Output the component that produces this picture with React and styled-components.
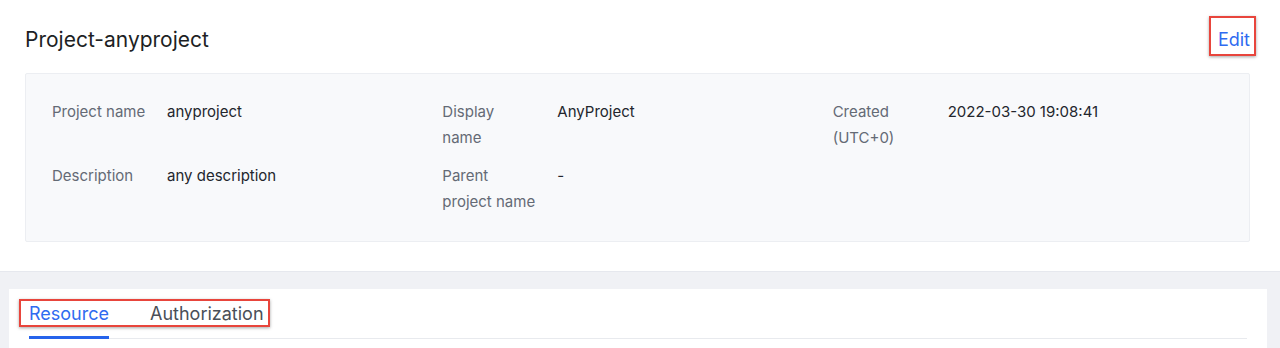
import React from 'react';
import styled, { createGlobalStyle } from 'styled-components';

const GlobalStyle = createGlobalStyle`
body {
  margin: 0;
  background: #ffffff;
  font-family: Inter, "Noto Sans", sans-serif;
  color: #1f2329;
}`

const Page = styled.div`
display: flex;
flex-direction: column;
height: 348px;
overflow: hidden;`

const Top = styled.section`
padding: 0 30px 29px 25px;
background: #fff;`

const Header = styled.header`
display: flex;
justify-content: space-between;
align-items: center;
height: 73px;
padding-top: 6px;
box-sizing: border-box;`

const Title = styled.h1`
margin: 0;
font-size: 21px;
font-weight: 400;
color: #1d1f24;`

const Highlight = styled.div`
position: relative;
display: inline-flex;
&::after {
  content: '';
  position: absolute;
  top: ${p => p.$t}px;
  right: ${p => p.$r}px;
  bottom: ${p => p.$b}px;
  left: ${p => p.$l}px;
  border: 2px solid #e8453c;
  box-shadow: 0 1px 3px rgba(0, 0, 0, 0.35);
  pointer-events: none;
}`

const EditLink = styled.a`
font-size: 18px;
color: #2f6bf0;
text-decoration: none;
cursor: pointer;`

const InfoCard = styled.div`
background: #f8f9fb;
border: 1px solid #eceef2;
border-radius: 2px;
padding: 25px 26px 26px;
display: grid;
grid-template-columns: repeat(3, 1fr);
row-gap: 12px;`

const Field = styled.div`
display: grid;
grid-template-columns: 115px 1fr;
font-size: 15px;
line-height: 26px;`

const Label = styled.div`
color: #646a75;
white-space: pre-line;`

const Value = styled.div`
color: #23262d;`

const Lower = styled.section`
flex: 1;
background: #f0f1f5;
border-top: 1px solid #e6e8ee;
padding: 17px 13px 0 9px;`

const Panel = styled.div`
background: #fff;
height: 100%;
padding: 0 20px;`

const TabBar = styled.div`
display: flex;
border-bottom: 1px solid #e8eaee;
padding-top: 15px;`

const Tab = styled.div`
position: relative;
font-size: 18px;
line-height: 20px;
padding-bottom: 14px;
color: ${p => (p.$active ? '#2f6bf0' : '#4a4f58')};
cursor: pointer;
& + & {
  margin-left: 41px;
}
&::after {
  content: '';
  display: ${p => (p.$active ? 'block' : 'none')};
  position: absolute;
  left: 0;
  right: 0;
  bottom: -1px;
  height: 3px;
  background: #2563eb;
}`

const TabGroup = styled(Highlight)`
display: flex;`

const fields = [
  ['Project name', 'anyproject'],
  ['Display\nname', 'AnyProject'],
  ['Created\n(UTC+0)', '2022-03-30 19:08:41'],
  ['Description', 'any description'],
  ['Parent\nproject name', '-'],
];

const App = () => {
  return (
    <Page>
      <GlobalStyle />
      <Top>
        <Header>
          <Title>Project-anyproject</Title>
          <Highlight $t={-13} $r={-6} $b={-6} $l={-9}>
            <EditLink>Edit</EditLink>
          </Highlight>
        </Header>
        <InfoCard>
          {fields.map(([label, value]) => (
            <Field key={label}>
              <Label>{label}</Label>
              <Value>{value}</Value>
            </Field>
          ))}
        </InfoCard>
      </Top>
      <Lower>
        <Panel>
          <TabBar>
            <TabGroup $t={-5} $r={-6} $b={11} $l={-10}>
              <Tab $active>Resource</Tab>
              <Tab>Authorization</Tab>
            </TabGroup>
          </TabBar>
        </Panel>
      </Lower>
    </Page>
  );
};

export default App;
